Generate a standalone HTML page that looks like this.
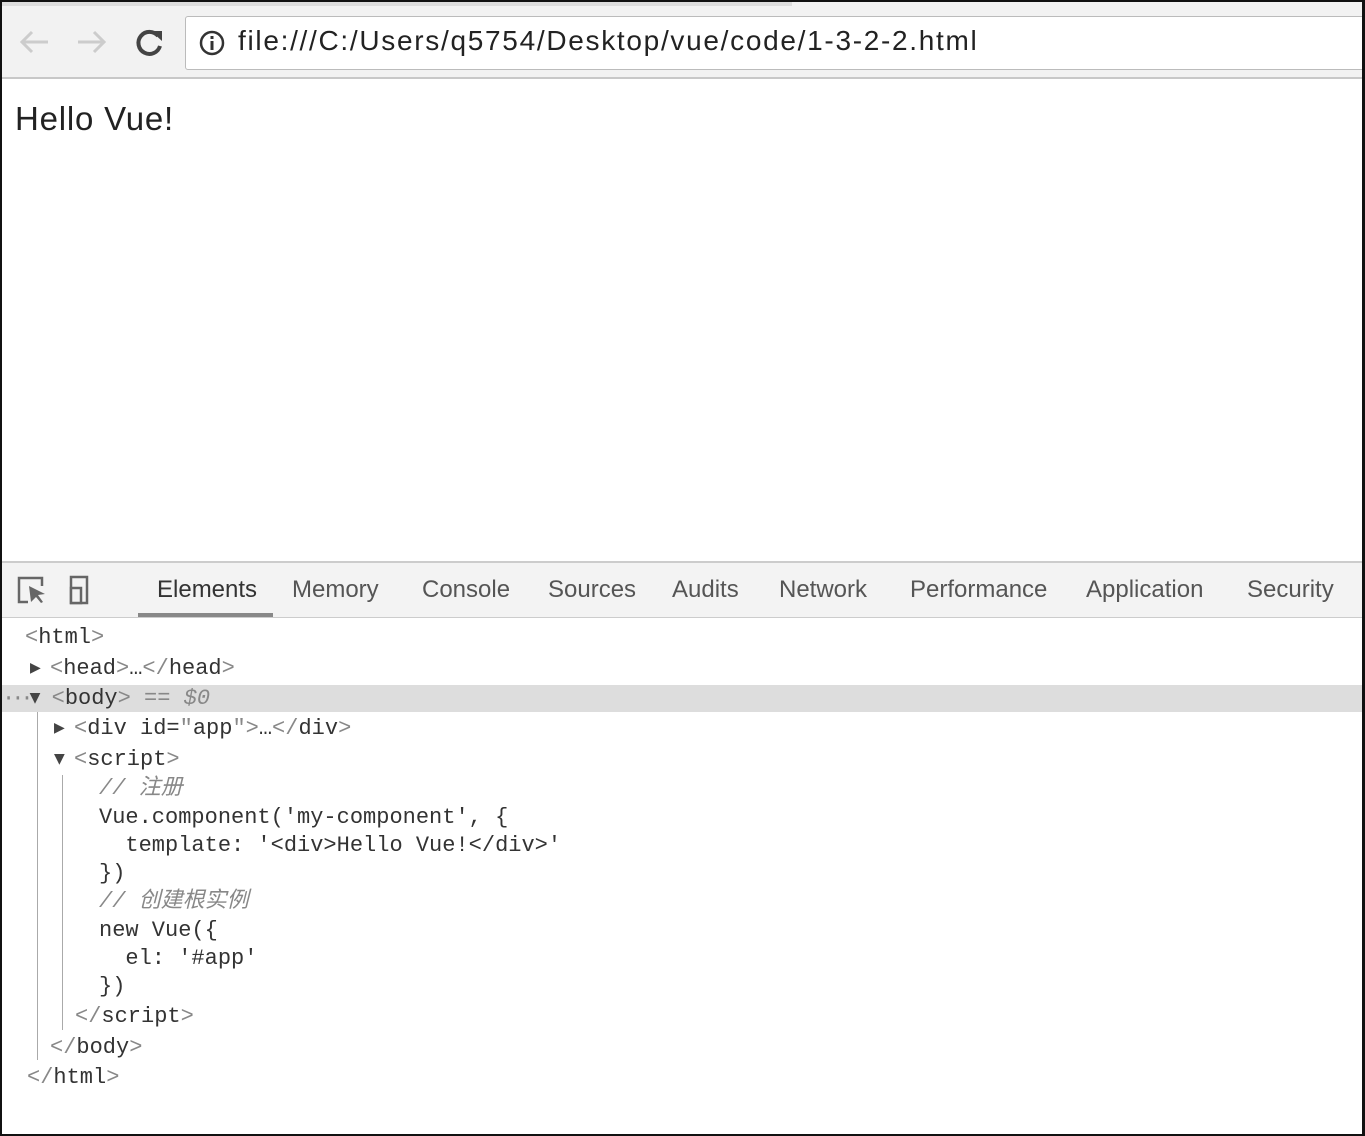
<!DOCTYPE html>
<html><head><style>
*{margin:0;padding:0;box-sizing:border-box}
body{width:1365px;height:1136px;background:#fff;position:relative;overflow:hidden;font-family:"Liberation Sans",sans-serif}
.frame{position:absolute;left:0;top:0;width:1365px;height:1136px;border:2px solid #111;border-right-width:3px}
.tb{position:absolute;left:2px;top:2px;width:1360px;height:77px;background:#f2f2f2;border-bottom:2px solid #c8c8c8}
.addr{position:absolute;left:185px;top:16px;width:1200px;height:54px;background:#fff;border:1px solid #bbb;border-radius:3px}
.url{position:absolute;left:238px;top:25px;font-size:28px;letter-spacing:1.7px;color:#222}
.hello{position:absolute;left:15px;top:100px;font-size:33px;letter-spacing:0.8px;color:#222}
.dt{position:absolute;left:2px;top:561px;width:1360px;height:57px;background:#f3f3f3;border-top:2px solid #ccc;border-bottom:1px solid #ccc}
.tab{position:absolute;top:590px;font-size:24px;color:#555;transform:translateY(-50%)}
.code{position:absolute;font-family:"Liberation Mono","Noto Sans CJK SC",monospace;font-size:22px;line-height:26px;color:#333;white-space:pre}
.t{font-family:"DejaVu Sans",sans-serif;font-size:14px;color:#444;display:inline-block;width:20px;vertical-align:2px}
.g{color:#888}
.sel{position:absolute;left:2px;top:685px;width:1360px;height:27px;background:#ddd}
.vl{position:absolute;width:1px;background:#aaa}
</style></head><body>
<div class="tb"></div>
<div style="position:absolute;left:2px;top:2px;width:790px;height:4px;background:#ddd"></div>
<svg style="position:absolute;left:18px;top:28px" width="150" height="30" viewBox="0 0 150 30">
<path d="M30 14H4M14 4L4 14L14 24" stroke="#ccc" stroke-width="3" fill="none"/>
<path d="M60 14H86M76 4L86 14L76 24" stroke="#ccc" stroke-width="3" fill="none"/>
<path d="M140 8A11 11 0 1 0 142 18" stroke="#444" stroke-width="4" fill="none"/>
<path d="M133 3L144 3L144 13Z" fill="#444"/>
</svg>
<div class="addr"></div>
<svg style="position:absolute;left:198px;top:29px" width="28" height="28"><circle cx="14" cy="14" r="11" stroke="#333" stroke-width="2.5" fill="none"/><rect x="12.5" y="12" width="3" height="9" fill="#333"/><rect x="12.5" y="7" width="3" height="3" fill="#333"/></svg>
<div class="url">file:///C:/Users/q5754/Desktop/vue/code/1-3-2-2.html</div>
<div class="hello">Hello Vue!</div>
<div class="dt"></div>
<svg style="position:absolute;left:16px;top:574px" width="90" height="32">
<path d="M12 28H3V4H26V12" stroke="#666" stroke-width="2.5" fill="none"/>
<path d="M13 12L29 20L22 21L27 28L25 29L20 23L15 28Z" fill="#666"/>
<rect x="55" y="3" width="16" height="26" stroke="#666" stroke-width="2.5" fill="none"/>
<rect x="55" y="14" width="10" height="15" stroke="#666" stroke-width="2.5" fill="#f3f3f3"/>
<rect x="106" y="2" width="2" height="28" fill="#ccc"/>
</svg>
<div style="position:absolute;left:138px;top:613px;width:135px;height:4px;background:#888"></div>
<div class="tab" style="left:157px;color:#333">Elements</div>
<div class="tab" style="left:292px">Memory</div>
<div class="tab" style="left:422px">Console</div>
<div class="tab" style="left:548px">Sources</div>
<div class="tab" style="left:672px">Audits</div>
<div class="tab" style="left:779px">Network</div>
<div class="tab" style="left:910px">Performance</div>
<div class="tab" style="left:1086px">Application</div>
<div class="tab" style="left:1247px">Security</div>
<div class="sel"></div>
<div class="vl" style="left:37px;top:712px;height:348px"></div>
<div class="vl" style="left:62px;top:775px;height:255px"></div>
<div class="code" style="left:25px;top:625px"><span class="g">&lt;</span>html<span class="g">&gt;</span></div>
<div class="code" style="left:30px;top:655px"><span class="t">▶</span><span class="g">&lt;</span>head<span class="g">&gt;</span>…<span class="g">&lt;/</span>head<span class="g">&gt;</span></div>
<div class="code" style="left:2px;top:685px"><span class="g" style="letter-spacing:-4px">···</span><span class="t" style="width:22px">▼</span><span class="g">&lt;</span>body<span class="g">&gt; == <i>$0</i></span></div>
<div class="code" style="left:54px;top:715px"><span class="t">▶</span><span class="g">&lt;</span>div id=<span class="g">"</span>app<span class="g">"&gt;</span>…<span class="g">&lt;/</span>div<span class="g">&gt;</span></div>
<div class="code" style="left:54px;top:746px"><span class="t">▼</span><span class="g">&lt;</span>script<span class="g">&gt;</span></div>
<div class="code" style="left:99px;top:776px"><i class="g">// 注册</i></div>
<div class="code" style="left:99px;top:805px">Vue.component('my-component', {</div>
<div class="code" style="left:99px;top:833px">  template: '&lt;div&gt;Hello Vue!&lt;/div&gt;'</div>
<div class="code" style="left:99px;top:861px">})</div>
<div class="code" style="left:99px;top:889px"><i class="g">// 创建根实例</i></div>
<div class="code" style="left:99px;top:918px">new Vue({</div>
<div class="code" style="left:99px;top:946px">  el: '#app'</div>
<div class="code" style="left:99px;top:974px">})</div>
<div class="code" style="left:75px;top:1004px"><span class="g">&lt;/</span>script<span class="g">&gt;</span></div>
<div class="code" style="left:50px;top:1035px"><span class="g">&lt;/</span>body<span class="g">&gt;</span></div>
<div class="code" style="left:27px;top:1065px"><span class="g">&lt;/</span>html<span class="g">&gt;</span></div>
<div class="frame"></div>
</body></html>
